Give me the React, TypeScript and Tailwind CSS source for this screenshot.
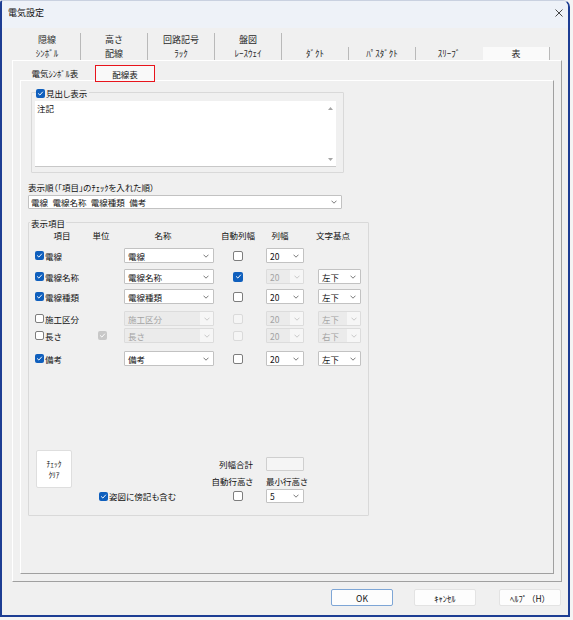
import React from "react";

function Chevron({ color = "#6b6b6b" }: { color?: string }) {
  return (
    <svg width="6" height="4" viewBox="0 0 6 4" className="shrink-0">
      <path d="M0.5 0.7 L3 3.2 L5.5 0.7" fill="none" stroke={color} strokeWidth="0.9" />
    </svg>
  );
}

function Check({ checked = false, disabled = false, big = false }: { checked?: boolean; disabled?: boolean; big?: boolean }) {
  const sz = big ? "w-[10px] h-[10px]" : "w-[9px] h-[9px]";
  if (checked) {
    return (
      <div className={`${sz} shrink-0 rounded-[2px] flex items-center justify-center ${disabled ? "bg-[#c8c8c8]" : "bg-[#0f5fbd]"}`}>
        <svg width="7" height="7" viewBox="0 0 8 8">
          <path d="M1.6 4.2 L3.3 5.8 L6.4 2.3" fill="none" stroke="white" strokeWidth="1.1" strokeLinecap="round" strokeLinejoin="round" />
        </svg>
      </div>
    );
  }
  return (
    <div className={`${sz} shrink-0 rounded-[2px] border ${disabled ? "border-[#dadada] bg-[#f5f5f5]" : "border-[#7d7d7d] bg-white"}`} />
  );
}

function Combo({ text, w, disabled = false }: { text: string; w: string; disabled?: boolean }) {
  if (disabled) {
    return (
      <div className={`${w} h-[15px] flex border border-[#dcdcdc] rounded-[1px] shrink-0 overflow-hidden`}>
        <div className="flex-1 bg-[#ebebeb] pl-[3px] flex items-center text-[#a3a3a3] whitespace-nowrap">{text}</div>
        <div className="w-[13px] bg-[#f6f6f6] flex items-center justify-center">
          <Chevron color="#c3c3c3" />
        </div>
      </div>
    );
  }
  return (
    <div className={`${w} h-[15px] flex items-center justify-between border border-[#c2c2c2] bg-white rounded-[1px] pl-[3px] pr-[4px] shrink-0`}>
      <span className="whitespace-nowrap">{text}</span>
      <Chevron />
    </div>
  );
}

type RowP = {
  label: string;
  checked: boolean;
  unit?: boolean;
  name: string;
  nameDisabled?: boolean;
  auto: boolean;
  autoDisabled?: boolean;
  width: string;
  widthDisabled?: boolean;
  base?: string;
  baseDisabled?: boolean;
  mt: string;
};

function Row(p: RowP) {
  return (
    <div className={`flex items-center h-[15px] ${p.mt}`}>
      <div className="w-[59px] flex items-center gap-[1px]">
        <Check checked={p.checked} />
        <span className="whitespace-nowrap">{p.label}</span>
      </div>
      <div className="w-[30px] flex items-center">
        {p.unit ? (
          <div className="ml-[4px]">
            <Check checked disabled />
          </div>
        ) : null}
      </div>
      <Combo w="w-[90px]" text={p.name} disabled={p.nameDisabled} />
      <div className="w-[52px] flex items-center pl-[19px]">
        <Check big checked={p.auto} disabled={p.autoDisabled} />
      </div>
      <Combo w="w-[38px]" text={p.width} disabled={p.widthDisabled} />
      {p.base ? (
        <div className="ml-[14px]">
          <Combo w="w-[43px]" text={p.base} disabled={p.baseDisabled} />
        </div>
      ) : null}
    </div>
  );
}

function Tab({ label, divider = true, selected = false }: { label: string; divider?: boolean; selected?: boolean }) {
  return (
    <div
      className={`w-[67px] flex items-center justify-center whitespace-nowrap border-r ${
        divider ? "border-[#b9b9b9]" : "border-transparent"
      } ${selected ? "bg-[#fafafa]" : ""}`}
    >
      {label}
    </div>
  );
}

export default function App() {
  return (
    <div className="w-[573px] h-[620px] bg-[#f4f4f4] font-['Noto_Sans_CJK_JP','Noto_Sans',sans-serif] text-[8.5px] leading-[12px] text-[#111111]">
      <div className="w-[570px] h-[617px] flex flex-col bg-[#f0f0f0] border-x-2 border-b-2 border-[#1d3d93] border-t border-t-[#c9d1e0] rounded-tr-[7px] rounded-tl-[3px] overflow-hidden">
        {/* title bar */}
        <div className="h-[27px] bg-[#eef2f8] flex items-start justify-between pl-[6px] pr-[5px] pt-[6px] shrink-0">
          <span className="text-[9px]">電気設定</span>
          <svg width="8" height="8" viewBox="0 0 8 8" className="mt-[2px]">
            <path d="M0.5 0.5 L7.5 7.5 M7.5 0.5 L0.5 7.5" stroke="#333" strokeWidth="0.9" />
          </svg>
        </div>

        {/* main tabs */}
        <div className="mt-[5px] ml-[12px] flex flex-col shrink-0 text-[9px] text-[#2a2a2a]">
          <div className="flex h-[14px]">
            <Tab label="隠線" />
            <Tab label="高さ" />
            <Tab label="回路記号" />
            <Tab label="盤図" />
          </div>
          <div className="flex h-[13px]">
            <Tab label="ｼﾝﾎﾞﾙ" />
            <Tab label="配線" />
            <Tab label="ﾗｯｸ" />
            <Tab label="ﾚｰｽｳｪｲ" />
            <Tab label="ﾀﾞｸﾄ" />
            <Tab label="ﾊﾟｽﾀﾞｸﾄ" />
            <Tab label="ｽﾘｰﾌﾞ" divider={false} />
            <Tab label="表" selected />
          </div>
        </div>

        {/* outer panel */}
        <div className="ml-[10px] w-[550px] h-[522px] shrink-0 flex flex-col pl-[7px] border border-t-white border-l-white border-r-[#a0a0a0] border-b-[#a0a0a0]">
          {/* sub tabs */}
          <div className="mt-[4px] flex items-end h-[15px]">
            <div className="ml-[2px] w-[66px] h-[15px] flex items-center justify-center whitespace-nowrap">電気ｼﾝﾎﾞﾙ表</div>
            <div className="ml-[7px] w-[60px] h-[17px] -mb-[2px] relative z-10 bg-[#f9f9f9] border-[1.5px] border-[#e8141c] flex items-center justify-center">
              配線表
            </div>
          </div>

          {/* inner panel */}
          <div className="w-[534px] h-[494px] flex flex-col border border-t-white border-l-white border-r-[#a0a0a0] border-b-[#a0a0a0]">
            {/* 見出し表示 */}
            <div className="ml-[10px] mt-[11px] w-[313px] border border-[#d9d9d9] rounded-[1px] pb-[5px] flex flex-col">
              <div className="-mt-[7px] h-[14px] ml-[4px] self-start bg-[#f0f0f0] pr-[2px] flex items-center gap-[1px]">
                <Check checked />
                <span className="[font-feature-settings:'palt']">見出し表示</span>
              </div>
              <div className="ml-[3px] mt-[1px] w-[301px] h-[66px] bg-white flex border-b border-b-[#c8c8c8]">
                <div className="flex-1 pl-[2px] pt-[1px]">注記</div>
                <div className="w-[11px] flex flex-col items-center justify-between pt-[6px] pb-[5px]">
                  <svg width="5" height="3" viewBox="0 0 5 3">
                    <path d="M0 3 L2.5 0 L5 3Z" fill="#a6a6a6" />
                  </svg>
                  <svg width="5" height="3" viewBox="0 0 5 3">
                    <path d="M0 0 L2.5 3 L5 0Z" fill="#a6a6a6" />
                  </svg>
                </div>
              </div>
            </div>

            {/* 表示順 */}
            <div className="ml-[7px] mt-[8px] whitespace-nowrap">
              <span className="[font-feature-settings:'palt']">表示順（｢項目｣の</span>
              <span>ﾁｪｯｸ</span>
              <span className="[font-feature-settings:'palt']">を入れた順）</span>
            </div>
            <div className="ml-[7px] mt-[2px] w-[314px] h-[14px] flex items-center justify-between border border-[#c2c2c2] bg-white rounded-[1px] pl-[2px] pr-[4px]">
              <span className="whitespace-nowrap [word-spacing:2.5px]">電線 電線名称 電線種類 備考</span>
              <Chevron />
            </div>

            {/* 表示項目 */}
            <div className="ml-[7px] mt-[13px] w-[341px] border border-[#d9d9d9] rounded-[1px] flex flex-col pl-[6px] pb-[12px]">
              <div className="-mt-[7px] h-[13px] -ml-[5px] self-start bg-[#f0f0f0] px-[1px] flex items-center">表示項目</div>
              <div className="flex h-[12px] items-center whitespace-nowrap">
                <span className="ml-[17px] w-[20px] flex justify-center">項目</span>
                <span className="ml-[19px] w-[20px] flex justify-center">単位</span>
                <span className="ml-[42px] w-[20px] flex justify-center">名称</span>
                <span className="ml-[45px] w-[40px] flex justify-center">自動列幅</span>
                <span className="ml-[12px] w-[20px] flex justify-center">列幅</span>
                <span className="ml-[23px] w-[40px] flex justify-center">文字基点</span>
              </div>

              <Row mt="mt-[7px]" label="電線" checked name="電線" auto={false} width="20" />
              <Row mt="mt-[6px]" label="電線名称" checked name="電線名称" auto width="20" widthDisabled base="左下" />
              <Row mt="mt-[5px]" label="電線種類" checked name="電線種類" auto={false} width="20" base="左下" />
              <Row
                mt="mt-[7px]"
                label="施工区分"
                checked={false}
                name="施工区分"
                nameDisabled
                auto={false}
                autoDisabled
                width="20"
                widthDisabled
                base="左下"
                baseDisabled
              />
              <Row
                mt="mt-[2px]"
                label="長さ"
                checked={false}
                unit
                name="長さ"
                nameDisabled
                auto={false}
                autoDisabled
                width="20"
                widthDisabled
                base="右下"
                baseDisabled
              />
              <Row mt="mt-[8px]" label="備考" checked name="備考" auto={false} width="20" base="左下" />

              {/* bottom block */}
              <div className="mt-[84px] flex items-start">
                <div className="w-[179px] flex flex-col">
                  <div className="ml-[1px] w-[36px] h-[38px] bg-white border border-[#dedede] rounded-[2px] flex flex-col items-center justify-center text-[7.5px] leading-[11px]">
                    <span>ﾁｪｯｸ</span>
                    <span>ｸﾘｱ</span>
                  </div>
                  <div className="mt-[3px] ml-[64px] h-[10px] flex items-center gap-[1px] whitespace-nowrap">
                    <Check checked />
                    <span className="[font-feature-settings:'palt']">姿図に傍記も含む</span>
                  </div>
                </div>
                <div className="mt-[7px] w-[90px] flex flex-col">
                  <div className="flex h-[14px] items-center">
                    <div className="w-[52px] pr-[13px] flex justify-end whitespace-nowrap">列幅合計</div>
                    <div className="w-[38px] h-[14px] border border-[#cfcfcf] bg-[#f5f5f5] rounded-[1px]" />
                  </div>
                  <div className="mt-[4px] flex h-[12px] items-center [font-feature-settings:'palt']">
                    <div className="w-[52px] pr-[13px] flex justify-end whitespace-nowrap">自動行高さ</div>
                    <div className="whitespace-nowrap">最小行高さ</div>
                  </div>
                  <div className="mt-[2px] flex h-[14px] items-center">
                    <div className="w-[52px] pl-[19px] flex items-center">
                      <Check big />
                    </div>
                    <div className="w-[38px] h-[14px] flex items-center justify-between border border-[#c2c2c2] bg-white rounded-[1px] pl-[3px] pr-[4px]">
                      <span>5</span>
                      <Chevron />
                    </div>
                  </div>
                </div>
              </div>
            </div>
          </div>
        </div>

        {/* dialog buttons */}
        <div className="mt-[7px] ml-[329px] flex shrink-0">
          <div className="w-[62px] h-[17px] bg-[#fdfdfd] border border-[#7ea6d6] rounded-[2px] flex items-center justify-center">OK</div>
          <div className="ml-[21px] w-[62px] h-[17px] bg-[#fdfdfd] border border-[#e3e3e3] rounded-[2px] flex items-center justify-center">ｷｬﾝｾﾙ</div>
          <div className="ml-[23px] w-[62px] h-[17px] bg-[#fdfdfd] border border-[#e3e3e3] rounded-[2px] flex items-center justify-center">ﾍﾙﾌﾟ（H）</div>
        </div>
      </div>
    </div>
  );
}
